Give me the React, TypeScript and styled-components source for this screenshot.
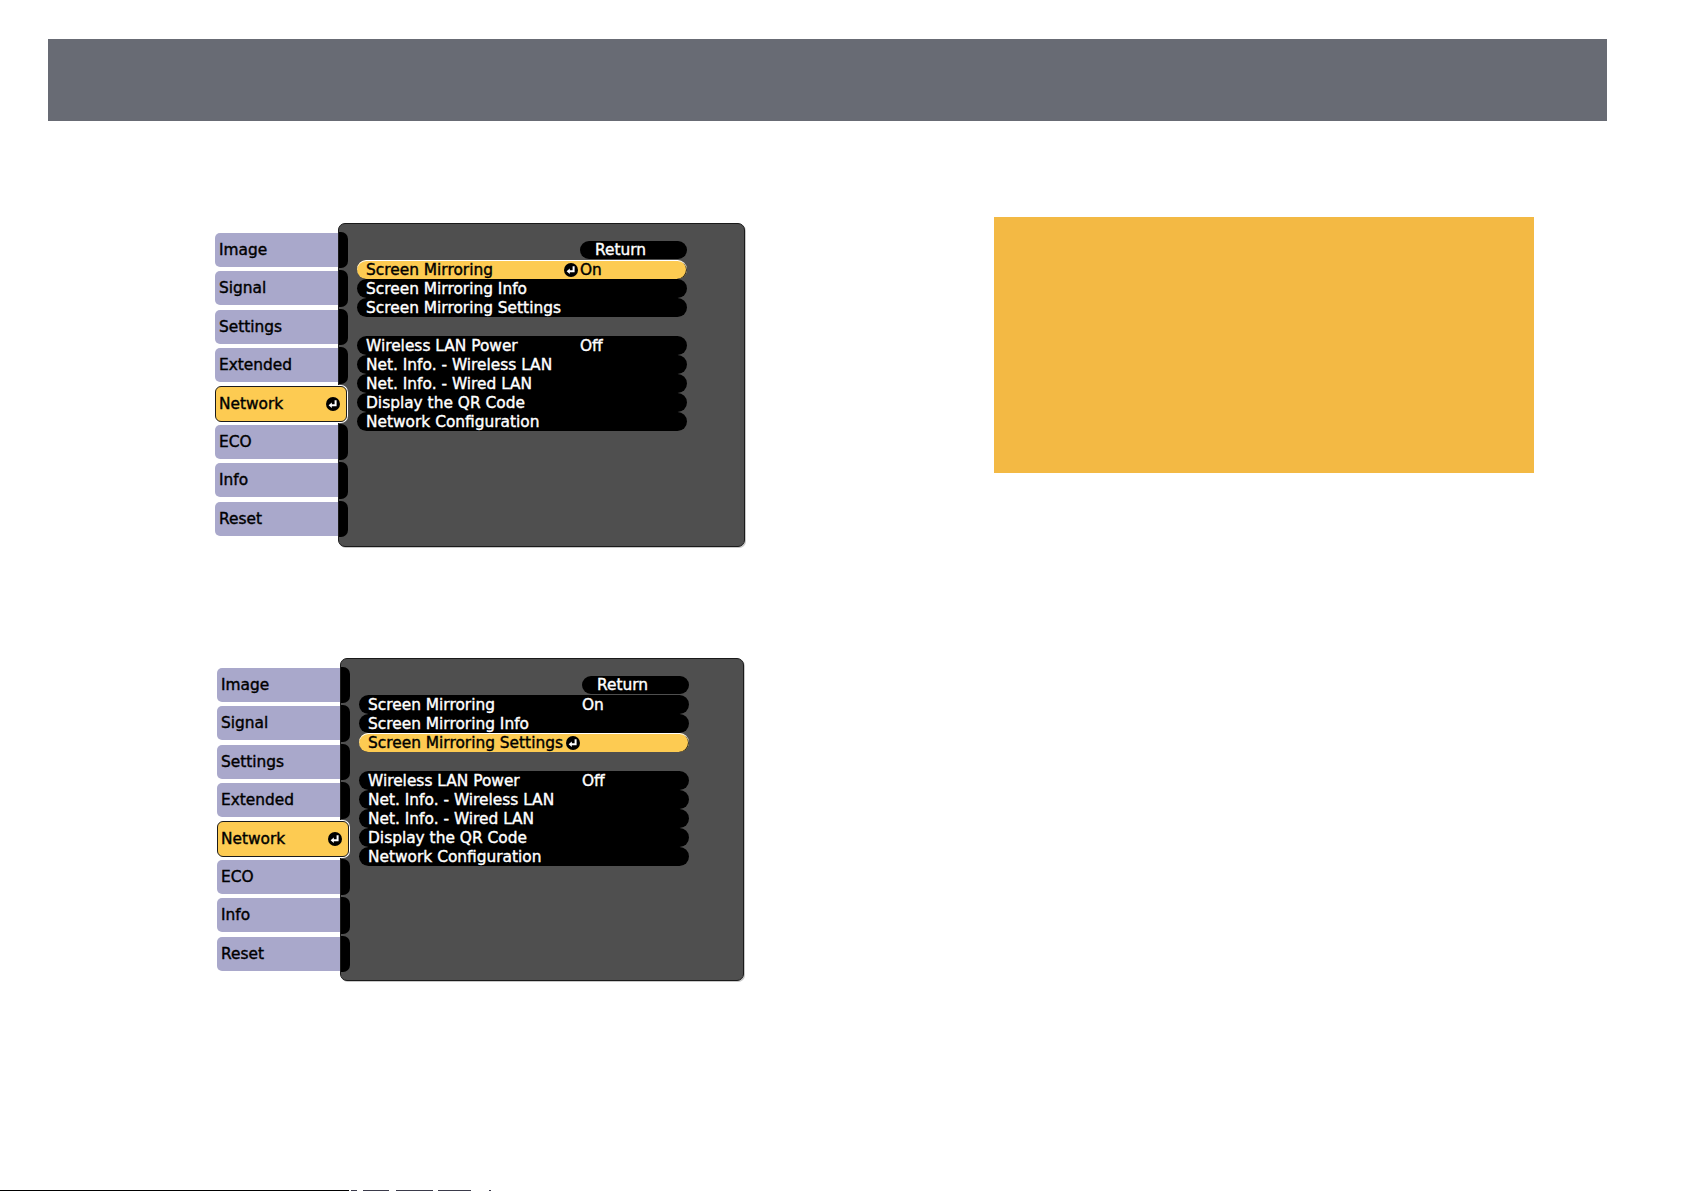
import React from "react";
import styled, { createGlobalStyle } from "styled-components";

const GlobalStyle = createGlobalStyle`
  html, body { margin: 0; padding: 0; background: #ffffff; }
  body { font-family: "DejaVu Sans", sans-serif; }
`;

const Page = styled.div`
  width: 1685px;
  height: 1191px;
  display: flex;
  flex-direction: column;
  overflow: hidden;
  background: #ffffff;
`;

const HeaderBar = styled.div`
  margin: 39px 0 0 48px;
  width: 1559px;
  height: 82px;
  background: #686b74;
  flex: none;
`;

const Main = styled.div`
  display: grid;
  grid-template-columns: 994px 540px;
  align-items: start;
`;

const MenuStack = styled.div`
  display: flex;
  flex-direction: column;
  padding: 102px 0 0 215px;
  gap: 111px;
`;

const Callout = styled.div`
  margin-top: 96px;
  height: 256px;
  background: #f3b944;
`;

const MenuFrame = styled.div<{ $shift: number }>`
  display: flex;
  align-items: flex-start;
  margin-left: ${(p) => p.$shift}px;
  font-family: "DejaVu Sans", sans-serif;
  font-weight: normal;
  font-size: 15.4px;
  -webkit-text-stroke: 0.4px currentColor;
`;

const TabColumn = styled.div`
  width: 122px;
  flex: none;
  display: grid;
  grid-auto-rows: 34px;
  row-gap: 4.4px;
  padding-top: 10px;
`;

const Tab = styled.div<{ $active?: boolean }>`
  position: relative;
  z-index: 2;
  display: flex;
  align-items: center;
  justify-content: space-between;
  box-sizing: border-box;
  padding: 0 6px 0 4px;
  color: #000;
  background: ${(p) => (p.$active ? "#fdcb52" : "#a9a8cb")};
  border-radius: ${(p) => (p.$active ? "6px" : "5px 0 0 5px")};
  width: ${(p) => (p.$active ? "132px" : "123px")};
  ${(p) =>
    p.$active
      ? `border: 1px solid #1b1b1b; box-shadow: 0 0 0 1px #ffffff; margin: -1px 0; height: 36px; padding-left: 3px;`
      : ``}
`;

const Panel = styled.div<{ $width: number; $height: number }>`
  position: relative;
  z-index: 1;
  flex: none;
  display: flex;
  box-sizing: border-box;
  margin-left: 1px;
  width: ${(p) => p.$width}px;
  height: ${(p) => p.$height}px;
  background: #4f4f4f;
  border: 1px solid #1a1a1a;
  border-radius: 7px;
  box-shadow: 1px 1px 0 #c8c8c8;
  overflow: hidden;
`;

const StripColumn = styled.div`
  width: 9px;
  flex: none;
  display: grid;
  grid-auto-rows: 36.4px;
  row-gap: 2px;
  padding-top: 8px;
`;

const StripSegment = styled.div`
  background: #000;
  border-radius: 0 7px 7px 0;
`;

const PanelBody = styled.div`
  display: flex;
  flex-direction: column;
  padding: 17px 0 0 9px;
`;

const ReturnPill = styled.div`
  align-self: flex-start;
  margin-left: 223px;
  width: 107px;
  height: 18px;
  box-sizing: border-box;
  padding-left: 15px;
  display: flex;
  align-items: center;
  background: #000;
  color: #fff;
  border-radius: 9px;
  margin-bottom: 1px;
`;

const RowGroup = styled.div<{ $gap?: number }>`
  display: flex;
  flex-direction: column;
  margin-top: ${(p) => p.$gap ?? 0}px;
`;

const Row = styled.div<{ $active?: boolean }>`
  width: 330px;
  height: 19px;
  box-sizing: border-box;
  display: flex;
  align-items: center;
  padding-left: 9px;
  border-radius: 9.5px;
  white-space: nowrap;
  background: ${(p) => (p.$active ? "#fdcb52" : "#000")};
  color: ${(p) => (p.$active ? "#000" : "#fff")};
  ${(p) => (p.$active ? "box-shadow: inset 0 1px 0 #ffffff, inset -1px 0 0 #1a1a1a;" : "")}
`;

const Label = styled.span<{ $width?: number }>`
  flex: none;
  width: ${(p) => (p.$width !== undefined ? `${p.$width}px` : "auto")};
`;

const Value = styled.span`
  flex: none;
`;

const IconWrap = styled.span<{ $gap?: number }>`
  display: inline-flex;
  margin-left: ${(p) => p.$gap ?? 0}px;
  margin-right: 2px;
`;

const Footer = styled.div`
  margin-top: auto;
  height: 1px;
  display: flex;
  align-items: stretch;
`;

const FootBit = styled.div<{ $w: number; $ml: number; $dark?: boolean }>`
  width: ${(p) => p.$w}px;
  margin-left: ${(p) => p.$ml}px;
  background: ${(p) => (p.$dark ? "#000" : "#3a3a4a")};
`;

const EnterIcon = () => (
  <svg width="14" height="14" viewBox="0 0 14 14" aria-hidden="true">
    <circle cx="7" cy="7" r="7" fill="#000" />
    <path d="M9.6 3.2 V8.2 H5" stroke="#fff" strokeWidth="2" fill="none" />
    <path d="M2.6 8.2 L5.8 5.4 L5.8 11 Z" fill="#fff" />
  </svg>
);

const tabs = ["Image", "Signal", "Settings", "Extended", "Network", "ECO", "Info", "Reset"];

type RowSpec = { label: string; value?: string };

const group1: RowSpec[] = [
  { label: "Screen Mirroring", value: "On" },
  { label: "Screen Mirroring Info" },
  { label: "Screen Mirroring Settings" },
];

const group2: RowSpec[] = [
  { label: "Wireless LAN Power", value: "Off" },
  { label: "Net. Info. - Wireless LAN" },
  { label: "Net. Info. - Wired LAN" },
  { label: "Display the QR Code" },
  { label: "Network Configuration" },
];

type MenuProps = {
  shift: number;
  panelWidth: number;
  panelHeight: number;
  activeRow: number;
  iconMode: "beforeValue" | "afterLabel";
};

const OsdMenu: React.FC<MenuProps> = ({ shift, panelWidth, panelHeight, activeRow, iconMode }) => {
  const renderRow = (r: RowSpec, i: number) => {
    const active = i === activeRow;
    if (active && iconMode === "beforeValue") {
      return (
        <Row key={r.label} $active>
          <Label $width={198}>{r.label}</Label>
          <IconWrap>
            <EnterIcon />
          </IconWrap>
          {r.value && <Value>{r.value}</Value>}
        </Row>
      );
    }
    if (active && iconMode === "afterLabel") {
      return (
        <Row key={r.label} $active>
          <Label>{r.label}</Label>
          <IconWrap $gap={3}>
            <EnterIcon />
          </IconWrap>
        </Row>
      );
    }
    return (
      <Row key={r.label}>
        <Label $width={214}>{r.label}</Label>
        {r.value && <Value>{r.value}</Value>}
      </Row>
    );
  };

  return (
    <MenuFrame $shift={shift}>
      <TabColumn>
        {tabs.map((t) => (
          <Tab key={t} $active={t === "Network"}>
            <span>{t}</span>
            {t === "Network" && <EnterIcon />}
          </Tab>
        ))}
      </TabColumn>
      <Panel $width={panelWidth} $height={panelHeight}>
        <StripColumn>
          {tabs.map((t) => (
            <StripSegment key={t} />
          ))}
        </StripColumn>
        <PanelBody>
          <ReturnPill>Return</ReturnPill>
          <RowGroup>{group1.map((r, i) => renderRow(r, i))}</RowGroup>
          <RowGroup $gap={19}>{group2.map((r, i) => renderRow(r, i + 3))}</RowGroup>
        </PanelBody>
      </Panel>
    </MenuFrame>
  );
};

export default function App() {
  return (
    <>
      <GlobalStyle />
      <Page>
        <HeaderBar />
        <Main>
          <MenuStack>
            <OsdMenu shift={0} panelWidth={407} panelHeight={324} activeRow={0} iconMode="beforeValue" />
            <OsdMenu shift={2} panelWidth={404} panelHeight={323} activeRow={2} iconMode="afterLabel" />
          </MenuStack>
          <Callout />
        </Main>
        <Footer>
          <FootBit $w={349} $ml={0} $dark />
          <FootBit $w={6} $ml={2} />
          <FootBit $w={26} $ml={6} />
          <FootBit $w={37} $ml={7} />
          <FootBit $w={33} $ml={5} />
          <FootBit $w={2} $ml={18} />
        </Footer>
      </Page>
    </>
  );
}
